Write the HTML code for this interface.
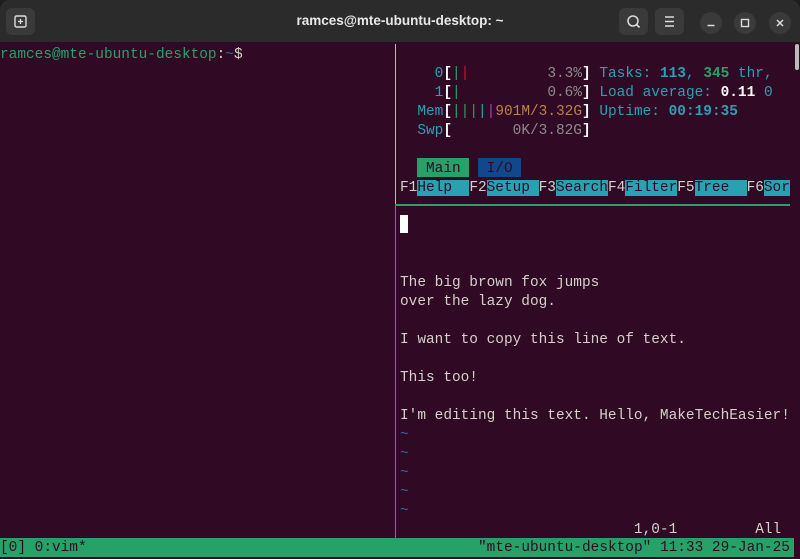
<!DOCTYPE html>
<html><head><meta charset="utf-8"><style>
*{margin:0;padding:0;box-sizing:border-box}
body{width:800px;height:559px;background:#1e1e1e;overflow:hidden;position:relative;font-family:"Liberation Mono",monospace}
.tb{position:absolute;left:0;top:0;width:800px;height:42px;background:#2b2b2b;border-radius:10px 10px 0 0}
.btn{position:absolute;top:8px;width:29px;height:27px;background:#3a3a3a;border-radius:6px}
.circ{position:absolute;top:12px;width:22px;height:22px;border-radius:50%;background:#3a3a3a}
.title{position:absolute;top:0;left:0;width:800px;text-align:center;line-height:42px;color:#e8e8e8;font-family:"Liberation Sans",sans-serif;font-size:13.5px;font-weight:600}
.term{position:absolute;left:0;top:42px;width:800px;height:517px;background:#300a24}
.l{position:absolute;white-space:pre;font-size:14.45px;line-height:19px;height:19px;color:#d3d0c8}
.c{color:#2aa1b3}.g{color:#26a269}.r{color:#c01c28}.w{color:#fff;font-weight:bold}.gr{color:#8a8a8a}.mg{color:#a347ba}.o{color:#b9804a}.b{color:#3465a4}
.cb{background:#2aa1b3;color:#300a24}
</style></head><body>
<div class="tb">
 <div class="btn" style="left:6px"><svg width="29" height="27"><rect x="9" y="8" width="11" height="11" rx="1.5" fill="none" stroke="#ddd" stroke-width="1.4"/><path d="M14.5 11v5M12 13.5h5" stroke="#ddd" stroke-width="1.3"/></svg></div>
 <div class="title">ramces@mte-ubuntu-desktop: ~</div>
 <div class="btn" style="left:619px"><svg width="29" height="27"><circle cx="14" cy="13" r="5" fill="none" stroke="#ddd" stroke-width="1.5"/><path d="M17.5 16.5l3 3" stroke="#ddd" stroke-width="1.6"/></svg></div>
 <div class="btn" style="left:655px"><svg width="29" height="27"><path d="M10 9h9M10 13.5h9M10 18h9" stroke="#ddd" stroke-width="1.5"/></svg></div>
 <div class="circ" style="left:700px"><svg width="22" height="22"><path d="M7.5 13.5h7" stroke="#ddd" stroke-width="1.5"/></svg></div>
 <div class="circ" style="left:734px"><svg width="22" height="22"><rect x="7.5" y="7.5" width="7" height="7" fill="none" stroke="#ddd" stroke-width="1.4"/></svg></div>
 <div class="circ" style="left:769px"><svg width="22" height="22"><path d="M8 8l6 6M14 8l-6 6" stroke="#ddd" stroke-width="1.5"/></svg></div>
</div>
<div class="term">
 <div style="position:absolute;left:395px;top:2px;width:1px;height:161px;background:#bdb7b0"></div>
 <div style="position:absolute;left:395px;top:163px;width:1px;height:333px;background:#26a269"></div>
 <div style="position:absolute;left:395px;top:162px;width:395px;height:2px;background:#26a269"></div>
 <div style="position:absolute;left:795px;top:2px;width:4px;height:26px;background:#bbb;border-radius:2px"></div>
</div>
<div class="l" style="left:0;top:46px"><span class="g">ramces@mte-ubuntu-desktop</span>:<span class="b">~</span>$</div>
<div class="l" style="left:400px;top:65px"><span class="c">    0</span><span class="w">[</span><span class="g">|</span><span class="r">|</span>         <span class="gr">3.3%</span><span class="w">]</span> <span class="c">Tasks: </span><span class="c" style="font-weight:bold">113</span><span class="c">, </span><span class="g" style="font-weight:bold">345</span><span class="c"> thr,</span></div>
<div class="l" style="left:400px;top:84px"><span class="c">    1</span><span class="w">[</span><span class="g">|</span>          <span class="gr">0.6%</span><span class="w">]</span> <span class="c">Load average: </span><span class="w">0.11</span> <span class="c">0</span></div>
<div class="l" style="left:400px;top:103px"><span class="c">  Mem</span><span class="w">[</span><span class="g">|||</span><span class="c">|</span><span class="mg">|</span><span class="o">901M/3.32G</span><span class="w">]</span> <span class="c">Uptime: </span><span class="c" style="font-weight:bold">00:19:35</span></div>
<div class="l" style="left:400px;top:122px"><span class="c">  Swp</span><span class="w">[</span>       <span class="gr">0K/3.82G</span><span class="w">]</span></div>
<div style="position:absolute;left:417px;top:158px;width:52px;height:19px;background:#26a269"></div>
<div style="position:absolute;left:478px;top:158px;width:43px;height:19px;background:#12488b"></div>
<div class="l" style="left:400px;top:160px;color:#300a24">   Main   I/O</div>
<div class="l" style="left:400px;top:179px">F1<span class="cb">Help  </span>F2<span class="cb">Setup </span>F3<span class="cb">Search</span>F4<span class="cb">Filter</span>F5<span class="cb">Tree  </span>F6<span class="cb">Sor</span></div>
<div style="position:absolute;left:400px;top:215px;width:8px;height:18px;background:#fff"></div>
<div class="l" style="left:400px;top:274px">The big brown fox jumps</div>
<div class="l" style="left:400px;top:293px">over the lazy dog.</div>
<div class="l" style="left:400px;top:331px">I want to copy this line of text.</div>
<div class="l" style="left:400px;top:369px">This too!</div>
<div class="l" style="left:400px;top:407px">I'm editing this text. Hello, MakeTechEasier!</div>
<div class="l b" style="left:400px;top:426px">~</div>
<div class="l b" style="left:400px;top:445px">~</div>
<div class="l b" style="left:400px;top:464px">~</div>
<div class="l b" style="left:400px;top:483px">~</div>
<div class="l b" style="left:400px;top:502px">~</div>
<div class="l" style="left:400px;top:521px">                           1,0-1         All</div>
<div style="position:absolute;left:0;top:538px;width:794px;height:19px;background:#26a269"></div>
<div class="l" style="left:0;top:539px;color:#300a24">[0] 0:vim*</div>
<div class="l" style="left:478px;top:539px;color:#300a24">"mte-ubuntu-desktop" 11:33 29-Jan-25</div>
</body></html>
